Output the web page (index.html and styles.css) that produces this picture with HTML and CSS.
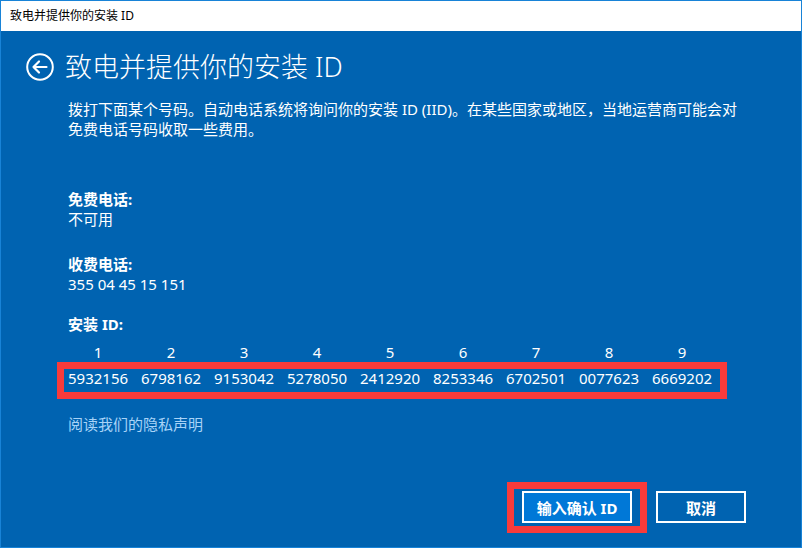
FILE: index.html
```html
<!DOCTYPE html>
<html lang="zh-CN">
<head>
    <meta charset="UTF-8">
    <title>致电并提供你的安装 ID</title>
    <link rel="stylesheet" href="styles.css">
</head>
<body>
    <div class="window">
        <div class="titlebar">致电并提供你的安装 ID</div>

        <div class="content">
            <div class="header">
                <svg class="back" width="28" height="28" viewBox="0 0 28 28">
                    <circle cx="14" cy="14" r="12.8" fill="none" stroke="#fff" stroke-width="2"/>
                    <path d="M7.5 14 H20.5 M13 8.5 L7.5 14 L13 19.5" fill="none" stroke="#fff" stroke-width="2.2" stroke-linecap="round" stroke-linejoin="round"/>
                </svg>
                <h1>致电并提供你的安装 ID</h1>
            </div>

            <div class="body">
                <p class="intro">拨打下面某个号码。自动电话系统将询问你的安装 ID (IID)。在某些国家或地区，当地运营商可能会对免费电话号码收取一些费用。</p>

                <div class="field first">
                    <div class="label">免费电话:</div>
                    <div class="value">不可用</div>
                </div>

                <div class="field">
                    <div class="label">收费电话:</div>
                    <div class="value">355 04 45 15 151</div>
                </div>

                <div class="field third">
                    <div class="label">安装 ID:</div>
                </div>

                <div class="id-grid heads" id="idHeads"></div>
                <div class="id-grid ids marked" id="idValues"></div>

                <a class="privacy" href="#">阅读我们的隐私声明</a>
            </div>

            <div class="footer">
                <div class="marked-btn">
                    <button class="btn primary">输入确认 ID</button>
                </div>
                <button class="btn">取消</button>
            </div>
        </div>
    </div>

    <script>
        const ids = ['5932156', '6798162', '9153042', '5278050', '2412920', '8253346', '6702501', '0077623', '6669202'];
        const heads = document.getElementById('idHeads');
        const values = document.getElementById('idValues');

        ids.forEach((id, i) => {
            const h = document.createElement('span');
            h.textContent = i + 1;
            heads.appendChild(h);

            const v = document.createElement('span');
            v.textContent = id;
            values.appendChild(v);
        });
    </script>
</body>
</html>
```

FILE: styles.css
```css
* {
    box-sizing: border-box;
}
body {
    margin: 0;
    padding: 0;
    font-family: "Noto Sans", "Noto Sans CJK SC", sans-serif;
    background-color: #0063b1;
}
.window {
    width: 802px;
    height: 548px;
    border: 1px solid #1883d7;
    background-color: #0063b1;
    color: #fff;
    overflow: hidden;
}
.titlebar {
    height: 30px;
    line-height: 29px;
    padding-left: 9px;
    background-color: #fff;
    color: #000;
    font-size: 12px;
}
.content {
    padding-top: 18px;
}
.header {
    display: flex;
    align-items: center;
    gap: 11px;
    padding-left: 25px;
}
.back {
    display: block;
    flex: none;
}
.header h1 {
    margin: 0;
    font-size: 27px;
    font-weight: 300;
    line-height: 36px;
}
.body {
    padding-left: 67px;
    font-size: 15px;
    line-height: 20px;
}
.intro {
    margin: 14px 0 0;
    width: 680px;
}
.field {
    margin-top: 25px;
}
.field.first {
    margin-top: 50px;
}
.field.third {
    margin-top: 20px;
}
.label {
    font-weight: bold;
}
.id-grid {
    display: grid;
    grid-template-columns: repeat(9, 60px);
    column-gap: 13px;
    width: 644px;
    text-align: center;
}
.heads {
    margin-top: 8px;
}
.ids {
    margin-top: 6px;
}
.marked {
    position: relative;
}
.marked::after {
    content: "";
    position: absolute;
    top: -6px;
    right: -15px;
    bottom: -11px;
    left: -11px;
    border: 7px solid #f93b3b;
    pointer-events: none;
}
.privacy {
    display: inline-block;
    margin-top: 26px;
    color: #a8d3f7;
    text-decoration: none;
}
.footer {
    display: flex;
    justify-content: flex-end;
    gap: 24px;
    margin-top: 57px;
    padding-right: 55px;
}
.marked-btn {
    position: relative;
}
.marked-btn::after {
    content: "";
    position: absolute;
    top: -9px;
    right: -15px;
    bottom: -10px;
    left: -15px;
    border: 7px solid #f93b3b;
    pointer-events: none;
}
.btn {
    display: block;
    width: 90px;
    height: 32px;
    border: 2px solid #fff;
    background-color: transparent;
    color: #fff;
    font-family: "Noto Sans", "Noto Sans CJK SC", sans-serif;
    font-size: 15px;
    font-weight: bold;
    padding: 0;
}
.btn.primary {
    width: 110px;
    background-color: #0078d7;
}
```
